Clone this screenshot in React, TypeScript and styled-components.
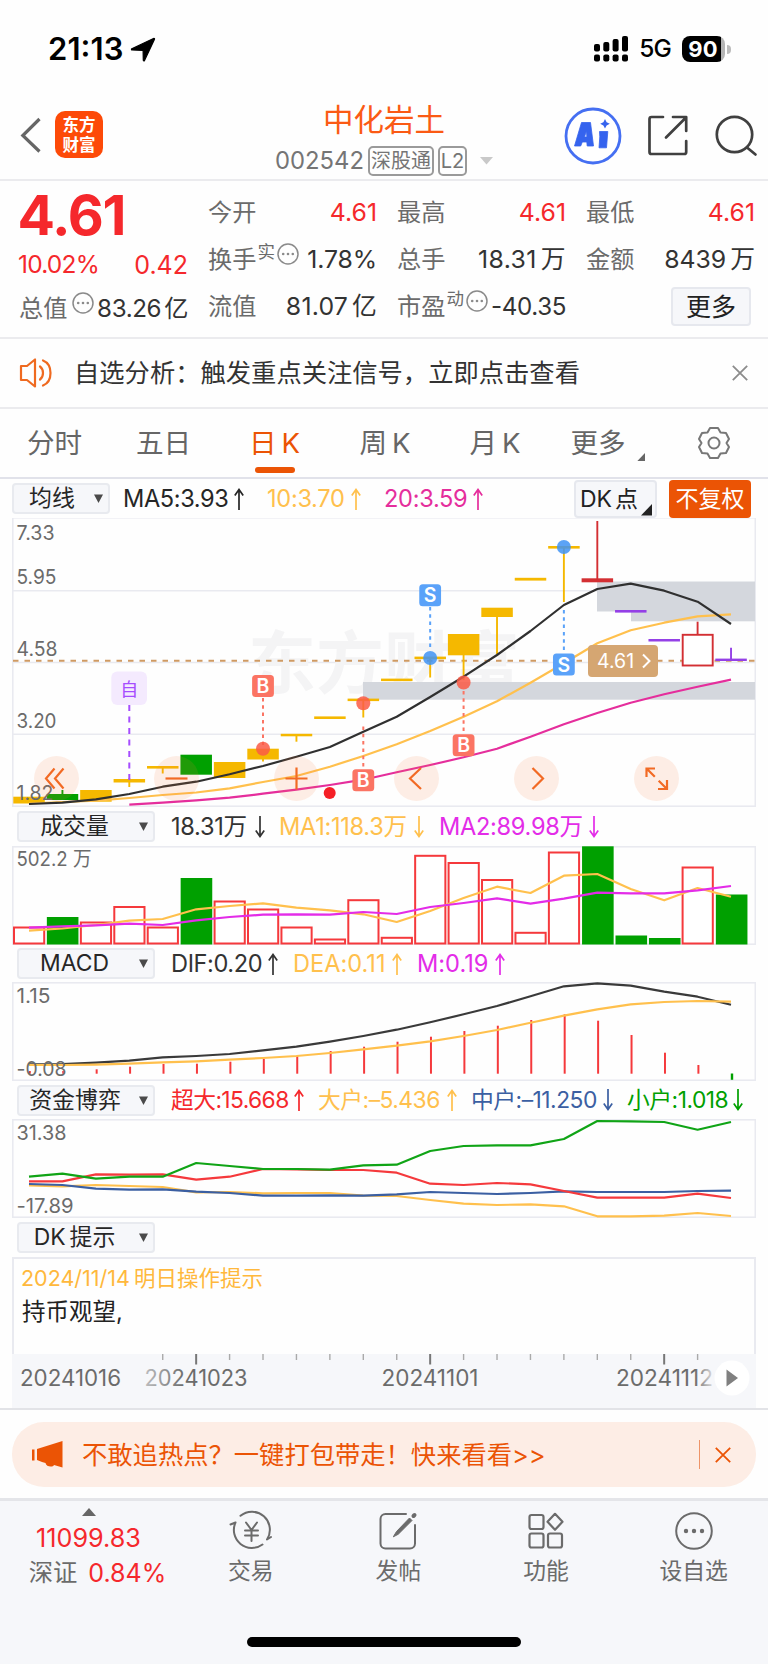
import React from "react";
import styled, { createGlobalStyle } from "styled-components";

const C = {
  orange: "#eb5405",
  red: "#f5282c",
  bar: "#f5393c",
  green: "#00a000",
  gold: "#f5b800",
  amber: "#ffc04d",
  magenta: "#e52e9c",
  violet: "#e32ce8",
  purple: "#9440e6",
  blue: "#3b5fa2",
  sky: "#5aa2f9",
  coral: "#fb7463",
  ink: "#333333",
  grey: "#6b6b6b",
  rule: "#ebebee",
  frame: "#e9eaf0",
  panel: "#f6f7fa",
};

const FONT = 'Inter, "Noto Sans CJK SC", sans-serif';

const Global = createGlobalStyle`
  * { box-sizing: border-box; }
  body { margin: 0; background: #fff; font-family: ${FONT}; font-feature-settings: "calt" 0; color: ${C.ink}; }
  svg { display: block; flex: none; }
  svg text { font-family: ${FONT}; }
`;

const Screen = styled.div`
  width: 768px;
  height: 1664px;
  display: flex;
  flex-direction: column;
  overflow: hidden;
  background: #fefefe;
`;

const Label = styled.span<{ $size?: number; $color?: string; $ls?: number; $weight?: number; $shift?: number }>`
  font-size: ${(p) => p.$size ?? 24.8}px;
  line-height: 1.2;
  color: ${(p) => p.$color ?? C.ink};
  letter-spacing: ${(p) => p.$ls ?? 0}px;
  font-weight: ${(p) => p.$weight ?? 400};
  margin-left: ${(p) => p.$shift ?? 0}px;
  white-space: nowrap;
`;
const Unit = styled.span<{ $gap?: number }>`
  margin-left: ${(p) => p.$gap ?? 4}px;
`;

/* Status bar */
const StatusBar = styled.header`
  height: 98px;
  padding: 0 37px 0 48px;
  display: flex;
  justify-content: space-between;
`;
const StatusSide = styled.div<{ $gap: number }>`
  height: 98px;
  display: flex;
  align-items: center;
  gap: ${(p) => p.$gap}px;
`;
const Clock = styled(Label)`
  font-feature-settings: "calt" 1;
  width: 77px;
  color: #000;
`;
const BatteryBox = styled.div`
  display: flex;
  align-items: center;
  gap: 2px;
`;
const BatteryBody = styled.div`
  width: 43px;
  height: 26px;
  border-radius: 8px;
  background: linear-gradient(90deg, #000 39px, #b5b5b5 39px);
  color: #fff;
  font: 700 22px/26px ${FONT};
  letter-spacing: 0.2px;
  text-align: center;
  padding-right: 1px;
`;
const BatteryCap = styled.div`
  width: 4px;
  height: 9px;
  border-radius: 0 5px 5px 0;
  background: #bbb;
`;

/* Title bar */
const TitleBar = styled.nav`
  height: 83px;
  display: grid;
  grid-template-columns: 250px 1fr 250px;
  border-bottom: 2px solid ${C.rule};
`;
const TitleLeft = styled.div`
  display: flex;
  align-items: flex-start;
  padding: 13px 0 0 20px;
  gap: 14px;
`;
const Logo = styled.div`
  width: 48px;
  height: 47px;
  border-radius: 10px;
  background: #fd4a08;
  color: #fff;
  font: 700 16.5px/20px ${FONT};
  padding-top: 4px;
  text-align: center;
`;
const TitleCenter = styled.div`
  display: flex;
  flex-direction: column;
  align-items: center;
`;
const StockName = styled.h1`
  margin: 0;
  padding-top: 4px;
  font: 400 30.5px/36px ${FONT};
  color: #fb5a14;
`;
const CodeRow = styled.div`
  display: flex;
  align-items: center;
  gap: 4px;
  height: 32px;
  margin-top: 7px;
`;
const Tag = styled.span<{ $w: number }>`
  width: ${(p) => p.$w}px;
  height: 30px;
  border: 2px solid #9a9a9a;
  border-radius: 5px;
  color: #757575;
  font-size: 20px;
  line-height: 26px;
  text-align: center;
  white-space: nowrap;
`;
const TitleRight = styled.div`
  display: flex;
  align-items: flex-start;
  padding: 9px 0 0 46px;
  gap: 26px;
`;

/* Quote */
const Quote = styled.section`
  height: 158px;
  padding: 8px 13px 0 19px;
  display: grid;
  grid-template-columns: repeat(4, 169px);
  column-gap: 20px;
  border-bottom: 2px solid ${C.rule};
`;
const QuoteCol = styled.div`
  display: flex;
  flex-direction: column;
`;
const Cell = styled.div<{ $h?: number }>`
  height: ${(p) => p.$h ?? 47}px;
  display: flex;
  align-items: center;
  justify-content: space-between;
`;
const CellName = styled.div`
  display: flex;
  align-items: center;
  font-size: 24.2px;
  line-height: 30px;
  color: ${C.grey};
  white-space: nowrap;
`;
const Sup = styled.span`
  font-size: 17.5px;
  line-height: 20px;
  margin: -15px 2px 0 1px;
`;
const DotsWrap = styled.span<{ $gap?: number }>`
  margin: -11px 0 0 ${(p) => p.$gap ?? 0}px;
`;
const MoreButton = styled.button`
  width: 80px;
  height: 39px;
  margin-left: auto;
  margin-right: 4px;
  padding: 0;
  border: 2px solid #e6e8ee;
  border-radius: 4px;
  background: ${C.panel};
  font: 400 25px/34px ${FONT};
  color: #222;
`;

/* Notice */
const Notice = styled.section`
  height: 70px;
  padding: 0 20px 0 19px;
  display: flex;
  align-items: center;
  border-bottom: 2px solid ${C.rule};
`;
const NoticeText = styled.p`
  margin: 0 auto 0 21px;
  font-size: 25.3px;
  line-height: 30px;
  color: #333;
`;

/* Period tabs */
const Tabs = styled.nav`
  height: 70px;
  display: flex;
  border-bottom: 2px solid #e1e2ea;
`;
const Tab = styled.div<{ $w: number; $on?: boolean }>`
  width: ${(p) => p.$w}px;
  padding-top: 16px;
  display: flex;
  flex-direction: column;
  align-items: center;
  font-size: 27.6px;
  line-height: 36px;
  white-space: nowrap;
  word-spacing: -3px;
  color: ${(p) => (p.$on ? C.orange : "#666")};
`;
const Underline = styled.i`
  width: 40px;
  height: 6px;
  margin-top: 6px;
  border-radius: 3px;
  background: ${C.orange};
`;
const TabRow = styled.span`
  display: flex;
  align-items: flex-end;
  gap: 11px;
`;
const GearSlot = styled.div`
  padding: 17px 0 0 33px;
`;

/* Indicator legends */
const Legend = styled.div<{ $h: number; $pad?: number }>`
  height: ${(p) => p.$h}px;
  padding-left: ${(p) => p.$pad ?? 17}px;
  display: flex;
  align-items: center;
`;
const Picker = styled.button<{ $w: number }>`
  width: ${(p) => p.$w}px;
  height: 31px;
  padding: 0 5px 0 0;
  border: 2px solid #e8eaef;
  border-radius: 4px;
  background: ${C.panel};
  display: flex;
  align-items: center;
  font: 400 22.9px/27px ${FONT};
  color: #262626;
  flex: none;
`;
const PickerText = styled.span<{ $r?: number }>`
  flex: 1;
  padding-right: ${(p) => p.$r ?? 9}px;
  text-align: center;
  white-space: nowrap;
`;
const Entry = styled.span<{ $w: number; $ml: number; $c: string; $ls?: number; $s?: number }>`
  width: ${(p) => p.$w}px;
  margin-left: ${(p) => p.$ml}px;
  display: flex;
  align-items: center;
  justify-content: space-between;
  font-size: ${(p) => p.$s ?? 23.6}px;
  line-height: 30px;
  letter-spacing: ${(p) => p.$ls ?? -0.3}px;
  color: ${(p) => p.$c};
  white-space: nowrap;
  flex: none;
`;
const DkButton = styled.button`
  width: 83px;
  height: 38px;
  margin-left: 91px;
  padding: 0 3px 0 4px;
  border: 2px solid #e6e8ee;
  border-radius: 4px;
  background: ${C.panel};
  display: flex;
  align-items: flex-end;
  justify-content: space-between;
  font: 400 23px/34px ${FONT};
  color: #222;
  white-space: nowrap;
`;
const AdjustButton = styled.button`
  width: 82px;
  height: 38px;
  margin-left: 12px;
  padding: 0;
  border: 0;
  border-radius: 4px;
  background: ${C.orange};
  color: #fff;
  font: 400 23px/36px ${FONT};
`;

const ChartWrap = styled.div`
  position: relative;
  margin-left: 12px;
`;
const Controls = styled.div`
  position: absolute;
  left: 22px;
  bottom: 6px;
  display: flex;
  gap: 75px;
`;
const RoundButton = styled.button`
  width: 45px;
  height: 45px;
  padding: 0;
  border: 0;
  border-radius: 50%;
  background: rgba(250, 120, 60, 0.13);
`;
const PriceTag = styled.div`
  position: absolute;
  left: 576px;
  top: 127px;
  width: 70px;
  height: 32px;
  padding: 0 7px 0 9px;
  border-radius: 4px;
  background: #d5a672;
  display: flex;
  align-items: center;
  justify-content: space-between;
  color: #fff;
  font-size: 19.5px;
`;

const Hint = styled.section`
  width: 744px;
  height: 97px;
  margin-left: 12px;
  padding: 2px 0 0 7px;
  border: 2px solid ${C.frame};
  border-bottom: 0;
  display: flex;
  flex-direction: column;
`;
const HintLine = styled.p<{ $c: string; $s: number; $pl?: number }>`
  margin: 0;
  padding-left: ${(p) => p.$pl ?? 0}px;
  font-size: ${(p) => p.$s}px;
  line-height: 34px;
  color: ${(p) => p.$c};
`;
const Axis = styled.section`
  width: 744px;
  height: 54px;
  margin-left: 12px;
  background: ${C.panel};
`;

/* Promo banner */
const PromoArea = styled.section`
  height: 93px;
  padding: 12px 12px 0;
  border-top: 2px solid #e2e3e7;
  border-bottom: 3px solid #e4e5e9;
`;
const Promo = styled.div`
  height: 65px;
  border-radius: 32px;
  background: #fdede5;
  padding: 0 25px 0 20px;
  display: flex;
  align-items: center;
`;
const PromoText = styled.span`
  margin: 0 auto 0 19px;
  font-size: 25.3px;
  line-height: 30px;
  color: ${C.orange};
`;
const PromoRule = styled.i`
  width: 1.5px;
  height: 29px;
  margin-right: 15px;
  background: #ee9468;
`;

/* Bottom bar */
const BottomBar = styled.footer`
  flex: 1;
  background: ${C.panel};
  display: flex;
  flex-direction: column;
  align-items: center;
  justify-content: space-between;
  padding-bottom: 17px;
`;
const BottomRow = styled.div`
  width: 100%;
  display: flex;
`;
const IndexBox = styled.div`
  width: 177px;
  padding: 7px 0 0 0;
  display: flex;
  flex-direction: column;
  align-items: center;
`;
const IndexLine = styled.div`
  height: 24px;
  display: flex;
  align-items: center;
  gap: 11px;
  padding-left: 18px;
`;
const Action = styled.div`
  width: 147.6px;
  padding-top: 9px;
  display: flex;
  flex-direction: column;
  align-items: center;
  font-size: 22.8px;
  line-height: 28px;
  color: ${C.grey};
  gap: 5px;
`;
const HomeBar = styled.div`
  width: 274px;
  height: 10px;
  border-radius: 5px;
  background: #000;
`;

/* Shared drawings */
const Dots = ({ gap }: { gap?: number }) => (
  <DotsWrap $gap={gap}>
    <svg width="22" height="22" viewBox="0 0 22 22">
      <circle cx="11" cy="11" r="10" fill="none" stroke="#8a8a8a" strokeWidth="1.5" />
      {[6.2, 11, 15.8].map((x) => (
        <circle key={x} cx={x} cy="11" r="1.3" fill="#8a8a8a" />
      ))}
    </svg>
  </DotsWrap>
);
const Arrow = ({ up }: { up: boolean }) => (
  <svg width="10" height="22" viewBox="0 0 10 22" fill="none" stroke="currentColor" strokeWidth="1.7">
    <path d={up ? "M5 22V1.5M.8 7.5L5 1.5l4.2 6" : "M5 0v20.5M.8 14.5L5 20.5l4.2-6"} />
  </svg>
);
const Caret = () => (
  <svg width="9" height="9" viewBox="0 0 9 9">
    <path d="M0 .5h9L4.5 9z" fill="#4a4a4a" />
  </svg>
);
const Corner = ({ s, c }: { s: number; c: string }) => (
  <svg width={s} height={s * 1.05} viewBox="0 0 10 10" preserveAspectRatio="none">
    <path d="M10 0v10H0z" fill={c} />
  </svg>
);
const Cross = ({ c }: { c: string }) => (
  <svg width="16" height="16" viewBox="0 0 16 16" stroke={c} strokeWidth="1.8">
    <path d="M.8.8l14.4 14.4M15.2.8L.8 15.2" />
  </svg>
);

/* Chart helpers: every panel shares the same horizontal slots */
const slot = (i: number) => 29 + i * 33.43;
const trace = (ys: number[], from = 0) =>
  ys.map((y, i) => `${slot(i + from).toFixed(1)},${y}`).join(" ");
const Line = ({ ys, c, from = 0, w = 2.2 }: { ys: number[]; c: string; from?: number; w?: number }) => (
  <polyline points={trace(ys, from)} fill="none" stroke={c} strokeWidth={w} strokeLinejoin="round" />
);
const Frame = ({ y, h }: { y: number; h: number }) => (
  <rect x="12.8" y={y + 0.8} width="742.5" height={h - 1.6} fill="none" stroke={C.frame} strokeWidth="1.6" />
);
const Scale = ({ y, w, children, s = 20 }: { y: number; w: number; children: string; s?: number }) => (
  <text x="16.5" y={y} fontSize={s} fill={C.grey} textLength={w} lengthAdjust="spacingAndGlyphs">
    {children}
  </text>
);

type Candle = { i: number; t: number; b: number; c: string; w?: [number, number]; hollow?: boolean };
const candles: Candle[] = [
  { i: 0, t: 796.7, b: 803.5, c: C.gold },
  { i: 1, t: 794, b: 800, c: C.green, w: [790, 800] },
  { i: 2, t: 790, b: 801.7, c: C.gold },
  { i: 3, t: 779, b: 782.5, c: C.gold, w: [778, 787] },
  { i: 4, t: 766, b: 768.6, c: C.gold, w: [767, 773.5] },
  { i: 5, t: 754.7, b: 774.7, c: C.green },
  { i: 6, t: 762, b: 778, c: C.gold },
  { i: 7, t: 748.7, b: 759.5, c: C.gold, w: [750, 761.5] },
  { i: 8, t: 733.8, b: 736.3, c: C.gold, w: [735, 741.7] },
  { i: 9, t: 716.4, b: 719, c: C.gold },
  { i: 10, t: 698.6, b: 701.1, c: C.gold, w: [700, 717.5] },
  { i: 11, t: 678.6, b: 681.1, c: C.gold },
  { i: 12, t: 656.6, b: 659.2, c: C.gold, w: [658, 677.5] },
  { i: 13, t: 634, b: 655.3, c: C.gold, w: [655, 680] },
  { i: 14, t: 607.7, b: 617, c: C.gold, w: [617, 654.5] },
  { i: 15, t: 577.8, b: 580.6, c: C.gold },
  { i: 16, t: 546, b: 548.6, c: C.gold, w: [547, 602] },
  { i: 17, t: 578.3, b: 582.3, c: "#d32f33", w: [521, 580] },
  { i: 18, t: 610, b: 612.6, c: C.purple },
  { i: 19, t: 639, b: 641.5, c: C.purple },
  { i: 20, t: 634, b: 666.3, c: "#d32f33", w: [621.7, 634], hollow: true },
  { i: 21, t: 658.6, b: 661, c: C.purple, w: [647.7, 660] },
];

const MarkBox = ({ i, y, k }: { i: number; y: number; k: "B" | "S" }) => (
  <g>
    <rect x={slot(i) - 10.9} y={y} width="21.8" height="22" rx="3.5" fill={k === "B" ? C.coral : C.sky} />
    <text x={slot(i)} y={y + 18} fontSize="19.5" fontWeight="600" fill="#fff" textAnchor="middle">
      {k}
    </text>
  </g>
);
const Drop = ({ i, a, b, c }: { i: number; a: number; b: number; c: string }) => (
  <line x1={slot(i)} x2={slot(i)} y1={a} y2={b} stroke={c} strokeWidth="2" strokeDasharray="3.5 3.8" />
);

const PriceChart = () => (
  <svg width="744" height="289" viewBox="12 518 744 289">
    <Frame y={517} h={290} />
    {[590.7, 662.5, 734.3].map((y) => (
      <line key={y} x1="13" x2="755" y1={y} y2={y} stroke={C.frame} strokeWidth="1.6" />
    ))}
    <text x="248" y="688" fontSize="68" fontWeight="700" fill="#f4f4f5" textLength="272">
      东方财富
    </text>
    <rect x="597" y="581.5" width="158" height="30" fill="#d4d7dd" />
    <rect x="631" y="611" width="124" height="10.3" fill="#d4d7dd" />
    <rect x="363" y="682" width="392" height="17.7" fill="#d4d7dd" />
    <line x1="13" x2="755" y1="660.8" y2="660.8" stroke="#cf9a63" strokeWidth="2" strokeDasharray="5.5 6" />
    {candles.map((k) => {
      const x = slot(k.i);
      return (
        <g key={k.i}>
          {k.w && <line x1={x} x2={x} y1={k.w[0]} y2={k.w[1]} stroke={k.c} strokeWidth="1.9" />}
          {k.hollow ? (
            <rect x={x - 14.9} y={k.t + 0.8} width="30" height={k.b - k.t - 1.6} fill="#fff" stroke={k.c} strokeWidth="1.9" />
          ) : (
            <rect x={x - 15.7} y={k.t} width="31.5" height={k.b - k.t} fill={k.c} />
          )}
        </g>
      );
    })}
    <Line c={C.magenta} from={3} ys={[804.7, 802.7, 800.3, 797.7, 793.7, 789.7, 785, 779.7, 772.3, 765, 757.3, 748.7, 736.7, 724.3, 713, 702.7, 694.3, 686.7, 679.7]} />
    <Line c={C.amber} ys={[803.5, 802, 800.7, 798, 795, 792.5, 788.3, 782, 776, 766.7, 756, 744.3, 731, 716.7, 701.3, 682.7, 663.3, 643.3, 630.3, 622.7, 616.3, 614.3]} />
    <Line c="#303030" ys={[804, 802.7, 799.3, 794, 786.7, 781.7, 774.3, 766, 756.7, 747, 731.7, 716.7, 697, 676.7, 655, 631, 605, 589, 583.7, 590.7, 601.7, 624]} />
    <Drop i={7} a={698} b={745} c={C.coral} />
    <Drop i={10} a={726.5} b={769} c={C.coral} />
    <Drop i={13} a={691} b={734} c={C.coral} />
    <Drop i={12} a={607} b={650} c={C.sky} />
    <Drop i={16} a={610} b={653} c={C.sky} />
    <line x1="129.3" x2="129.3" y1="705" y2="780" stroke="#a64dff" strokeWidth="2" strokeDasharray="6 5.5" />
    {[[7, 748.8, 0], [10, 703.3, 0], [13, 682.5, 0], [12, 658, 1], [16, 547, 1]].map(([i, y, s]) => (
      <circle key={i} cx={slot(i)} cy={y} r="7" fill={s ? "#3f93f5" : "#fa5a45"} fillOpacity="0.85" />
    ))}
    <MarkBox k="B" i={7} y={675} />
    <MarkBox k="B" i={10} y={769.3} />
    <MarkBox k="B" i={13} y={734.3} />
    <MarkBox k="S" i={12} y={584.3} />
    <MarkBox k="S" i={16} y={653.5} />
    <rect x="111.3" y="671.5" width="35.7" height="33.5" rx="6" fill="#f4eafe" />
    <text x="129.2" y="695.5" fontSize="18" fill="#a64dff" textAnchor="middle">
      自
    </text>
    <circle cx="329.7" cy="793" r="6" fill="#f51f26" />
    <Scale y={539.5} w={38}>7.33</Scale>
    <Scale y={583.5} w={40}>5.95</Scale>
    <Scale y={656} w={41}>4.58</Scale>
    <Scale y={728} w={40}>3.20</Scale>
    <Scale y={800} w={37}>1.82</Scale>
  </svg>
);

const volumes: [number, boolean][] = [
  [927, false], [917, true], [922, false], [906.5, false], [927, false], [878, true], [901, false],
  [909, false], [927, false], [939, false], [899.7, false], [937.3, false], [855.3, false], [862.5, false],
  [879.5, false], [932.3, false], [852, false], [846.3, true], [935.5, true], [938, true], [867, false], [894.5, true],
];
const VolumeChart = () => (
  <svg width="744" height="99" viewBox="12 846 744 99">
    <Frame y={846} h={99} />
    {volumes.map(([y, down], i) =>
      down ? (
        <rect key={i} x={slot(i) - 15.6 + i * 0.02} y={y} width="31.6" height={944.5 - y} fill={C.green} />
      ) : (
        <rect key={i} x={slot(i) - 15} y={y + 0.5} width="30.2" height={943 - y} fill="#fff" stroke={C.bar} strokeWidth="2" />
      )
    )}
    <Line c={C.amber} ys={[930.7, 928.5, 925, 920.7, 919, 909.3, 906, 903.3, 907.7, 910.3, 914.3, 922, 911, 898, 886.7, 893, 875.7, 874, 889, 900.3, 888, 896.7]} />
    <Line c={C.violet} ys={[927.7, 926.3, 925.3, 923.7, 925, 920.3, 917, 914.7, 914.3, 914.7, 912, 914, 907, 903, 898.3, 903.7, 898.7, 892.7, 893.3, 893.3, 890.3, 886]} />
    <Scale y={866} w={75} s={20}>502.2 万</Scale>
  </svg>
);

const histogram = [1071, 1071, 1069.3, 1066.7, 1064, 1063.7, 1061.7, 1059, 1056, 1051, 1046.7, 1041.7, 1036.7, 1031, 1025.7, 1020, 1014.3, 1020.7, 1035, 1052.7, 1065];
const MacdChart = () => (
  <svg width="744" height="99" viewBox="12 982 744 99">
    <Frame y={982} h={99} />
    {histogram.map((y, i) => (
      <line key={i} x1={slot(i) + 0.8} x2={slot(i) + 0.8} y1={y} y2="1073.7" stroke={C.bar} strokeWidth="2" />
    ))}
    <line x1="732" x2="732" y1="1073.5" y2="1079.8" stroke={C.green} strokeWidth="2.4" />
    <Line c="#3a3a3a" ys={[1064.3, 1064, 1062.7, 1060.7, 1057.3, 1056, 1054, 1050.3, 1046.7, 1041.7, 1036, 1029.7, 1022.3, 1014.3, 1006, 996.3, 986.3, 983.3, 985.7, 991.7, 996.7, 1004.7]} />
    <Line c={C.amber} ys={[1065, 1065, 1064.7, 1063.7, 1062.3, 1061.3, 1059.7, 1058, 1056, 1053, 1049.3, 1045.7, 1041.3, 1036, 1030, 1022.7, 1015.7, 1009.3, 1004.3, 1002, 1001, 1001.7]} />
    <Scale y={1002.7} w={34}>1.15</Scale>
    <Scale y={1076} w={50}>-0.08</Scale>
  </svg>
);

const third = (v: number[]) => v.map((n) => +(950 + n / 3).toFixed(1));
const FundChart = () => (
  <svg width="744" height="99" viewBox="12 1119 744 99">
    <Frame y={1119} h={99} />
    <Line c={C.amber} ys={third([706, 709, 705, 708, 711, 727, 726, 730, 729, 729, 737, 738, 750, 761, 765, 763, 769, 799, 799, 797, 789, 798])} />
    <Line c={C.blue} ys={third([702, 705, 716, 719, 718, 725, 729, 737, 737, 736, 737, 733, 726, 729, 732, 729, 724, 726, 726, 726, 723, 722])} />
    <Line c={C.bar} ys={third([694, 694, 673, 674, 673, 689, 680, 657, 658, 660, 660, 668, 701, 705, 699, 703, 723, 743, 743, 743, 731, 744])} />
    <Line c="#10a416" ys={third([680, 671, 686, 680, 680, 639, 648, 657, 657, 659, 646, 644, 603, 588, 586, 586, 567, 513, 514, 516, 539, 516])} />
    <Scale y={1139.5} w={50}>31.38</Scale>
    <Scale y={1213} w={57}>-17.89</Scale>
  </svg>
);

const DateAxis = () => (
  <svg width="744" height="54" viewBox="12 1354 744 54">
    <defs>
      <linearGradient id="fadeIn" gradientUnits="userSpaceOnUse" x1="130" x2="185" y1="0" y2="0">
        <stop offset="0.2" stopColor="#c4c4c6" />
        <stop offset="1" stopColor={C.grey} />
      </linearGradient>
      <linearGradient id="fadeOut" gradientUnits="userSpaceOnUse" x1="695" x2="713" y1="0" y2="0">
        <stop offset="0" stopColor={C.grey} />
        <stop offset="1" stopColor="#dcdcde" />
      </linearGradient>
    </defs>
    {Array.from({ length: 17 }, (_, n) => n + 4).map((i) => {
      const major = i === 5 || i === 12 || i === 19;
      return (
        <line key={i} x1={slot(i)} x2={slot(i)} y1="1354" y2={major ? 1364.5 : 1360} stroke={major ? "#777" : "#aaa"} strokeWidth={major ? 2 : 1.4} />
      );
    })}
    <g fontSize="22.3" fill={C.grey}>
      <text x="20" y="1385.5" textLength="101" lengthAdjust="spacingAndGlyphs">20241016</text>
      <text x="144.5" y="1385.5" textLength="103" lengthAdjust="spacingAndGlyphs" fill="url(#fadeIn)">20241023</text>
      <text x="381.5" y="1385.5" textLength="97" lengthAdjust="spacingAndGlyphs">20241101</text>
      <text x="616" y="1385.5" textLength="97" lengthAdjust="spacingAndGlyphs" fill="url(#fadeOut)">20241112</text>
    </g>
    <circle cx="732" cy="1378" r="17.5" fill="#fff" />
    <path d="M726.5 1369.5L738 1378l-11.5 8.5z" fill="#808080" />
  </svg>
);

const controls = [
  "M20.5 12.5L12 22.5l8.5 10M29.5 12.5L21 22.5l8.5 10",
  "M11.5 22.5h22",
  "M11.5 22.5h22M22.5 11.5v22",
  "M27 12L16 22.5 27 33",
  "M18.5 12l10.5 10.5L18.5 33",
  "M12.5 21V12.5H21M12.8 12.8l8 8M33 24v9h-9M32.7 32.7l-8-8",
];

const App = () => (
  <Screen>
    <Global />
    <StatusBar>
      <StatusSide $gap={5}>
        <Clock $size={31} $weight={600} $ls={0.1}>21:13</Clock>
        <svg width="26" height="25" viewBox="0 0 26 25">
          <path d="M23.5 1.5L1.8 11.8c-.6.4-.4 1.2.3 1.2l11 .4.2 9.8c0 .8.9.9 1.2.2L24.5 2.3c.2-.6-.4-1.1-1-.8z" fill="#000" stroke="#000" strokeWidth="1.2" strokeLinejoin="round" />
        </svg>
      </StatusSide>
      <StatusSide $gap={11}>
        <svg width="34" height="26" viewBox="0 0 34 26">
          {[[0, 8], [9.3, 6], [18.6, 3], [28, 0]].map(([x, y]) => (
            <g key={x}>
              <rect x={x} y={y} width="6" height={15.5 - y} rx="2" fill="#000" />
              <rect x={x} y="18.5" width="6" height="7" rx="2" fill="#000" />
            </g>
          ))}
        </svg>
        <Label $size={24.5} $color="#000" $weight={500} $ls={-0.8}>5G</Label>
        <BatteryBox>
          <BatteryBody>90</BatteryBody>
          <BatteryCap />
        </BatteryBox>
      </StatusSide>
    </StatusBar>

    <TitleBar>
      <TitleLeft>
        <svg width="21" height="48" viewBox="0 0 21 48" fill="none" stroke="#666" strokeWidth="3.2">
          <path d="M19.5 8L2.8 24.5l16.7 16" />
        </svg>
        <Logo>东方<br />财富</Logo>
      </TitleLeft>
      <TitleCenter>
        <StockName>中化岩土</StockName>
        <CodeRow>
          <Label $size={23.8} $color="#757575" $ls={0}>002542</Label>
          <Tag $w={66}>深股通</Tag>
          <Tag $w={29}>L2</Tag>
          <svg width="22" height="8" viewBox="-9 0 22 8">
            <path d="M0 0h13L6.5 7.5z" fill="#c9c9c9" />
          </svg>
        </CodeRow>
      </TitleCenter>
      <TitleRight>
        <svg width="58" height="58" viewBox="0 0 58 58">
          <circle cx="29" cy="29" r="27" fill="#fff" stroke="#456ff2" strokeWidth="2.8" />
          <path d="M17.5 15.5h9l3 23.5h-6.3l-.4-4h-4.5l-1.6 4h-6.2zM20.5 30h2.4l-.5-6z" fill="#3563ee" fillRule="evenodd" stroke="#3563ee" strokeWidth="0.8" strokeLinejoin="round" />
          <path d="M35.5 24.5h8.3l-1.3 16.3h-7.5l.8-11z" fill="#3563ee" stroke="#3563ee" strokeWidth="0.8" strokeLinejoin="round" />
          <path d="M41 12l1.6 3.2 3.2 1.6-3.2 1.6L41 21.6l-1.6-3.2-3.2-1.6 3.2-1.6z" fill="#3563ee" />
        </svg>
        <svg width="40" height="58" viewBox="0 0 40 58" fill="none" stroke="#404040" strokeWidth="2.7" strokeLinecap="round" strokeLinejoin="round">
          <path d="M15 10H3.5a2 2 0 0 0-2 2v33a2 2 0 0 0 2 2h32.7a2 2 0 0 0 2-2V34M25 10h13.2v14M18 30.5L37.5 11" />
        </svg>
        <svg width="44" height="58" viewBox="0 0 44 58" fill="none" stroke="#404040" strokeWidth="2.7" strokeLinecap="round">
          <circle cx="20.5" cy="27.5" r="17.7" />
          <path d="M33 40.5l8.5 7" />
        </svg>
      </TitleRight>
    </TitleBar>

    <Quote>
      <QuoteCol>
        <Cell $h={53}><Label $size={55.5} $weight={700} $color={C.red} $ls={-1.2} $shift={-1.5}>4.61</Label></Cell>
        <Cell $h={46}>
          <Label $size={24.5} $color={C.red} $ls={-0.8} $shift={-1}>10.02%</Label>
          <Label $size={25} $color={C.red}>0.42</Label>
        </Cell>
        <Cell $h={41}>
          <CellName>总值<Dots gap={5} /></CellName>
          <Label $size={24.2} $ls={-0.4}>83.26<Unit $gap={3}>亿</Unit></Label>
        </Cell>
      </QuoteCol>
      <QuoteCol>
        <Cell><CellName>今开</CellName><Label $color={C.red}>4.61</Label></Cell>
        <Cell><CellName>换手<Sup>实</Sup><Dots /></CellName><Label $ls={-0.1}>1.78%</Label></Cell>
        <Cell><CellName>流值</CellName><Label $ls={0.2}>81.07<Unit>亿</Unit></Label></Cell>
      </QuoteCol>
      <QuoteCol>
        <Cell><CellName>最高</CellName><Label $color={C.red}>4.61</Label></Cell>
        <Cell><CellName>总手</CellName><Label $ls={0.4}>18.31<Unit>万</Unit></Label></Cell>
        <Cell><CellName>市盈<Sup>动</Sup><Dots /></CellName><Label $size={24.2} $ls={-0.4}>-40.35</Label></Cell>
      </QuoteCol>
      <QuoteCol>
        <Cell><CellName>最低</CellName><Label $color={C.red}>4.61</Label></Cell>
        <Cell><CellName>金额</CellName><Label>8439<Unit>万</Unit></Label></Cell>
        <Cell><MoreButton>更多</MoreButton></Cell>
      </QuoteCol>
    </Quote>

    <Notice>
      <svg width="34" height="30" viewBox="0 0 34 30" fill="none" stroke="#ef6a20" strokeWidth="2.2" strokeLinejoin="round" strokeLinecap="round">
        <path d="M2 8h6l8-6.5v27L8 22H2z" />
        <path d="M21 8.5c4 3 4 10 0 13M24 2.5c10 4 10 21 0 25" />
      </svg>
      <NoticeText>自选分析：触发重点关注信号，立即点击查看</NoticeText>
      <Cross c="#8c8c8c" />
    </Notice>

    <Tabs>
      <Tab $w={109}>分时</Tab>
      <Tab $w={109}>五日</Tab>
      <Tab $w={113} $on>日 K<Underline /></Tab>
      <Tab $w={108}>周 K</Tab>
      <Tab $w={112}>月 K</Tab>
      <Tab $w={113}>
        <TabRow>更多<Corner s={8} c="#666" /></TabRow>
      </Tab>
      <GearSlot>
        <svg width="34" height="34" viewBox="0 0 34 34" fill="none" stroke="#777" strokeWidth="2" strokeLinejoin="round">
          <path d="M13 2h8l2.5 4.5 5.500.5 3 6-2.5 4 2.5 4-3 6-5.500.5L21 32h-8l-2.5-4.5L5 27l-3-6 2.5-4L2 13l3-6 5.500-.5z" />
          <circle cx="17" cy="17" r="5.5" />
        </svg>
      </GearSlot>
    </Tabs>

    <Legend $h={39} $pad={12}>
      <Picker $w={98}><PickerText $r={4}>均线</PickerText><Caret /></Picker>
      <Entry $w={121} $ml={13} $c="#262626" $ls={-0.4}>MA5:3.93<Arrow up /></Entry>
      <Entry $w={94} $ml={23} $c={C.amber}>10:3.70<Arrow up /></Entry>
      <Entry $w={99} $ml={23} $c={C.magenta}>20:3.59<Arrow up /></Entry>
      <DkButton><span>DK<Unit $gap={3}>点</Unit></span><Corner s={11} c="#222" /></DkButton>
      <AdjustButton>不复权</AdjustButton>
    </Legend>
    <ChartWrap>
      <PriceChart />
      <PriceTag>
        4.61
        <svg width="9" height="16" viewBox="0 0 9 16" fill="none" stroke="#fff" strokeWidth="2">
          <path d="M1 1.5L7.5 8 1 14.5" />
        </svg>
      </PriceTag>
      <Controls>
        {controls.map((d) => (
          <RoundButton key={d}>
            <svg width="45" height="45" viewBox="0 0 45 45" fill="none" stroke="#f26a24" strokeWidth="2.2">
              <path d={d} />
            </svg>
          </RoundButton>
        ))}
      </Controls>
    </ChartWrap>

    <Legend $h={39}>
      <Picker $w={138}><PickerText>成交量</PickerText><Caret /></Picker>
      <Entry $w={94} $ml={16} $c={C.ink}>18.31万<Arrow up={false} /></Entry>
      <Entry $w={145} $ml={14} $c={C.amber}>MA1:118.3万<Arrow up={false} /></Entry>
      <Entry $w={160} $ml={15} $c={C.violet}>MA2:89.98万<Arrow up={false} /></Entry>
    </Legend>
    <ChartWrap><VolumeChart /></ChartWrap>

    <Legend $h={37}>
      <Picker $w={138}><PickerText>MACD</PickerText><Caret /></Picker>
      <Entry $w={107} $ml={16} $c={C.ink} $ls={-0.4}>DIF:0.20<Arrow up /></Entry>
      <Entry $w={109} $ml={15} $c={C.amber} $ls={0}>DEA:0.11<Arrow up /></Entry>
      <Entry $w={88} $ml={15} $c={C.violet} $ls={0}>M:0.19<Arrow up /></Entry>
    </Legend>
    <ChartWrap><MacdChart /></ChartWrap>

    <Legend $h={38}>
      <Picker $w={138}><PickerText $r={8}>资金博弈</PickerText><Caret /></Picker>
      <Entry $w={133} $ml={16} $c={C.red} $s={22.8} $ls={-0.6}>超大:15.668<Arrow up /></Entry>
      <Entry $w={139} $ml={14} $c={C.amber} $s={22.8} $ls={-0.5}>大户:–5.436<Arrow up /></Entry>
      <Entry $w={142} $ml={14} $c={C.blue} $s={22.8} $ls={-0.5}>中户:–11.250<Arrow up={false} /></Entry>
      <Entry $w={116} $ml={14} $c={C.green} $s={22.8} $ls={-0.5}>小户:1.018<Arrow up={false} /></Entry>
    </Legend>
    <ChartWrap><FundChart /></ChartWrap>

    <Legend $h={39}>
      <Picker $w={138}><PickerText>DK<Unit>提示</Unit></PickerText><Caret /></Picker>
    </Legend>
    <Hint>
      <HintLine $c="#ffb83c" $s={21.5}>2024/11/14<Unit>明日操作提示</Unit></HintLine>
      <HintLine $c="#222" $s={23.5} $pl={1}>持币观望,</HintLine>
    </Hint>
    <Axis><DateAxis /></Axis>

    <PromoArea>
      <Promo>
        <svg width="31" height="27" viewBox="0 0 31 27">
          <path d="M0 8.5h2.5v11H0zM5 8L30.5 0v26.5L22 24c-1 2.5-8 2-8.5-2L10 21l-5-2z" fill={C.orange} />
        </svg>
        <PromoText>不敢追热点？一键打包带走！快来看看&gt;&gt;</PromoText>
        <PromoRule />
        <Cross c={C.orange} />
      </Promo>
    </PromoArea>

    <BottomBar>
      <BottomRow>
        <IndexBox>
          <svg width="14" height="8" viewBox="0 0 14 8"><path d="M7 0l7 8H0z" fill="#666" /></svg>
          <Cell $h={45}><Label $size={25.2} $color={C.red}>11099.83</Label></Cell>
          <IndexLine>
            <Label $size={24.3} $color={C.grey}>深证</Label>
            <Label $size={25} $color={C.red}>0.84%</Label>
          </IndexLine>
        </IndexBox>
        <Action>
          <svg width="44" height="42" viewBox="0 0 44 42" fill="none" stroke={C.grey} strokeWidth="2" strokeLinecap="round" strokeLinejoin="round">
            <path d="M11.5 5.8A18 18 0 0 1 38 29.5l4-2.5M33.5 34.5A18 18 0 0 1 6.5 12.5L1.5 14.5" />
            <path d="M17 12.5l5.5 7.5 5.5-7.5M16 20.5h13M16 25.5h13M22.5 20.5V31" />
          </svg>
          交易
        </Action>
        <Action>
          <svg width="40" height="42" viewBox="0 0 40 42" fill="none" stroke={C.grey} strokeWidth="2" strokeLinecap="round">
            <path d="M28 4H7.5a5 5 0 0 0-5 5v24.5a5 5 0 0 0 5 5H32a5 5 0 0 0 5-5V15" />
            <path d="M15.5 26.5l3-5L31.5 8l2.5 2.5L20.500 24z" fill={C.grey} strokeWidth="1" strokeLinejoin="round" />
            <path d="M35.5 6l1-1" strokeWidth="4" />
          </svg>
          发帖
        </Action>
        <Action>
          <svg width="38" height="42" viewBox="0 0 38 42" fill="none" stroke={C.grey} strokeWidth="2.2" strokeLinejoin="round">
            <rect x="2.5" y="5" width="14" height="14" rx="2" />
            <rect x="2.5" y="23.5" width="14" height="14" rx="2" />
            <rect x="21" y="23.5" width="14" height="14" rx="2" />
            <path d="M28 3.8l7.5 8-7.5 8-7.5-8z" />
          </svg>
          功能
        </Action>
        <Action>
          <svg width="40" height="42" viewBox="0 0 40 42">
            <circle cx="20" cy="21" r="17.8" fill="none" stroke={C.grey} strokeWidth="2" />
            {[12, 20, 28].map((x) => <circle key={x} cx={x} cy="21" r="2.2" fill={C.grey} />)}
          </svg>
          设自选
        </Action>
      </BottomRow>
      <HomeBar />
    </BottomBar>
  </Screen>
);

export default App;
